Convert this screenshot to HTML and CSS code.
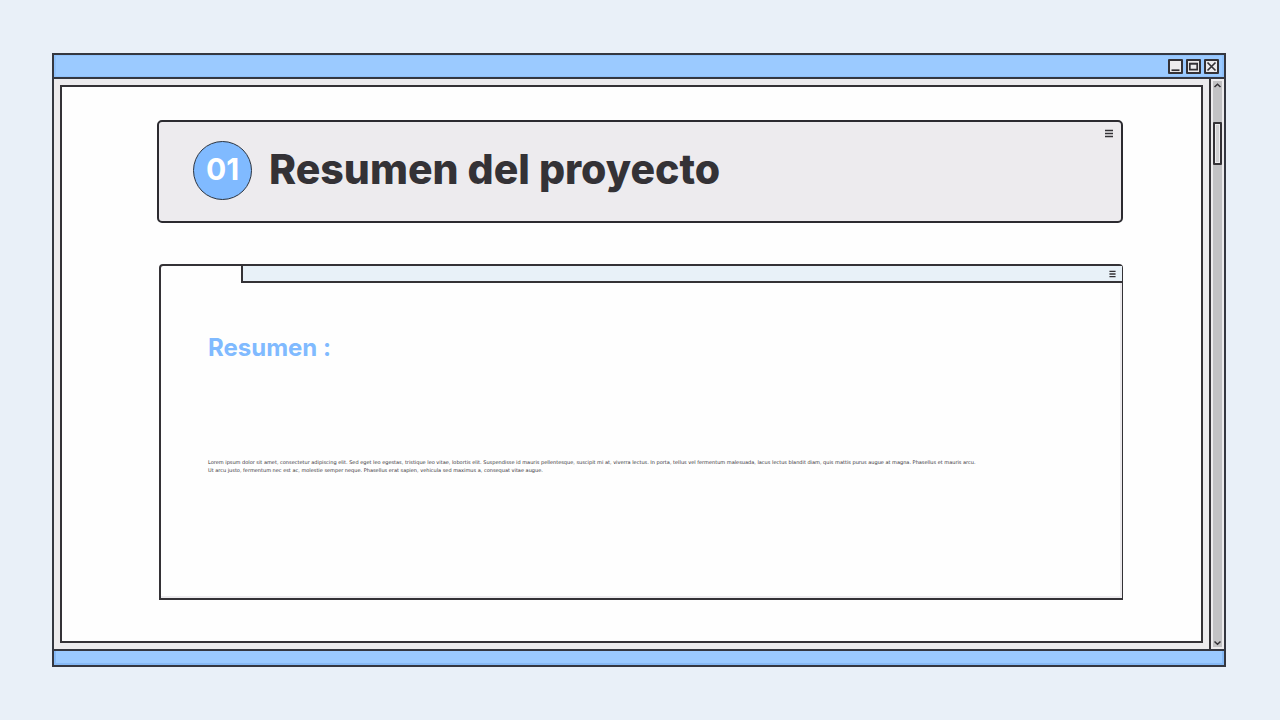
FILE: index.html
```html
<!DOCTYPE html>
<html lang="es">
  <head>
    <meta charset="UTF-8" />
    <meta name="viewport" content="width=device-width, initial-scale=1" />
    <title>Resumen del proyecto</title>
    <link rel="stylesheet" href="styles.css">
  </head>
  <body>
    <div class="window">
      <!-- Title bar -->
      <div class="titlebar">
        <button class="win-btn" type="button" aria-label="Minimizar">
          <svg viewBox="0 0 15 15"><path d="M3.5 11.2h8" /></svg>
        </button>
        <button class="win-btn" type="button" aria-label="Maximizar">
          <svg viewBox="0 0 15 15"><path d="M3.8 4.5h7.4v6.2H3.8z" /><path d="M3.5 4.8h8" /></svg>
        </button>
        <button class="win-btn" type="button" aria-label="Cerrar">
          <svg viewBox="0 0 15 15"><path d="M3.5 3.5l8 8M11.5 3.5l-8 8" /></svg>
        </button>
      </div>

      <div class="window-body">
        <main class="page">
          <header class="banner">
            <div class="number">01</div>
            <h1>Resumen del proyecto</h1>
            <button class="menu-btn" type="button" aria-label="Menú">
              <svg viewBox="0 0 8 9"><path d="M0 1.5h8M0 4.5h8M0 7.5h8" /></svg>
            </button>
          </header>

          <section class="panel">
            <div class="panel-top">
              <div class="tab"></div>
              <div class="panel-bar">
                <button class="menu-btn small" type="button" aria-label="Opciones">
                  <svg viewBox="0 0 8 9"><path d="M0.5 1.5h7M0.5 4.5h7M0.5 7.5h7" /></svg>
                </button>
              </div>
            </div>
            <div class="panel-content">
              <h2>Resumen :</h2>
              <p>
                Lorem ipsum dolor sit amet, consectetur adipiscing elit. Sed eget leo egestas, tristique leo vitae, lobortis elit. Suspendisse id mauris pellentesque, suscipit mi at, viverra lectus. In porta, tellus vel fermentum malesuada, lacus lectus blandit diam, quis mattis purus augue at magna. Phasellus et mauris arcu.<br />
                Ut arcu justo, fermentum nec est ac, molestie semper neque. Phasellus erat sapien, vehicula sed maximus a, consequat vitae augue.
              </p>
            </div>
          </section>
        </main>

        <!-- Scrollbar -->
        <div class="scrollbar">
          <button class="scroll-btn" type="button" aria-label="Subir">
            <svg viewBox="0 0 9 8"><path d="M1.5 6l3-2.8 3 2.8" /></svg>
          </button>
          <div class="track"><div class="thumb"></div></div>
          <button class="scroll-btn" type="button" aria-label="Bajar">
            <svg viewBox="0 0 9 8"><path d="M1.5 2.5l3 2.8 3-2.8" /></svg>
          </button>
        </div>
      </div>

      <div class="bottombar"></div>
    </div>
  </body>
</html>
```

FILE: styles.css
```css
* {
  box-sizing: border-box;
}
body {
  margin: 0;
  min-height: 100vh;
  padding: 53px 54px 53px 52px;
  display: flex;
  background: #e9f0f8;
  color: #343236;
  font-family: Inter, "Liberation Sans", sans-serif;
}
h1,
h2,
p {
  margin: 0;
}
button {
  padding: 0;
  border: 0;
  background: none;
  color: inherit;
}
svg {
  display: block;
  width: 100%;
  height: 100%;
  fill: none;
  stroke: #343236;
  stroke-width: 2;
}

/* Window frame */
.window {
  flex: 1;
  min-width: 0;
  display: flex;
  flex-direction: column;
  border: 2px solid #343740;
  background: #ecebed;
}
.titlebar {
  display: flex;
  justify-content: flex-end;
  gap: 3px;
  height: 24px;
  padding: 4px 5px 0;
  background: #9bcaff;
  border-bottom: 2px solid #343740;
  box-shadow: inset 2px 1px #8fc1fa, inset -2px -1px #8fc1fa;
}
.win-btn {
  width: 15px;
  height: 15px;
  border: 2px solid #343236;
  border-radius: 1px;
  background: #ecebed;
}
.win-btn svg {
  width: 15px;
  height: 15px;
  margin: -2px;
  stroke-width: 1.7;
}
.window-body {
  flex: 1;
  display: flex;
  min-width: 0;
}
.bottombar {
  height: 16px;
  background: #9bcaff;
  border-top: 2px solid #343740;
  box-shadow: inset 2px 0 #86b9f5, inset -2px -2px #86b9f5;
}

/* Scrollbar */
.scrollbar {
  display: flex;
  flex-direction: column;
  width: 15px;
  padding: 2px;
  border-left: 2px solid #343236;
}
.scroll-btn {
  height: 8px;
  background: #c2c2c4;
}
.scroll-btn svg {
  stroke-width: 1.5;
}
.track {
  flex: 1;
  padding-top: 33px;
  background: #c2c2c4;
}
.thumb {
  height: 43px;
  border: 2px solid #343236;
  border-radius: 1px;
  background: #ecebed;
  box-shadow: inset 0 0 0 1px #ecebed, inset 0 0 0 3px #d0d0d2;
}

/* Page */
.page {
  flex: 1;
  min-width: 0;
  display: flex;
  flex-direction: column;
  gap: 41px;
  margin: 6px;
  padding: 33px 78px 41px 95px;
  border: 2px solid #343236;
  background: #fefefe;
}
.banner {
  position: relative;
  display: flex;
  align-items: center;
  gap: 17px;
  height: 103px;
  padding: 0 34px 2px;
  border: 2px solid #2c2b30;
  border-radius: 5px;
  background: #edebee;
}
.number {
  width: 59px;
  height: 59px;
  padding-bottom: 4px;
  display: flex;
  align-items: center;
  justify-content: center;
  border: 1px solid #2b3440;
  border-radius: 50%;
  background: #80baff;
  color: #fff;
  font-size: 30px;
  font-weight: 700;
}
h1 {
  padding-bottom: 4px;
  font-size: 41px;
  line-height: 52px;
  font-weight: 800;
}
.menu-btn {
  position: absolute;
  top: 7px;
  right: 8px;
  width: 8px;
  height: 9px;
}
.menu-btn svg {
  stroke-width: 1.7;
}
.menu-btn.small {
  position: static;
  width: 7px;
  height: 8px;
}

/* Panel */
.panel {
  flex: 1;
  display: flex;
  flex-direction: column;
  margin-left: 2px;
  border: 2px solid #343236;
  border-right-width: 1px;
  border-radius: 4px 4px 0 0;
  box-shadow: inset -2px -2px #edebee;
}
.panel-top {
  display: flex;
  height: 17px;
}
.tab {
  width: 80px;
}
.panel-bar {
  flex: 1;
  display: flex;
  align-items: center;
  justify-content: flex-end;
  padding-right: 6px;
  border-left: 2px solid #343236;
  border-bottom: 2px solid #343236;
  background: #e8f1f8;
}
.panel-content {
  padding: 50px 47px;
}
h2 {
  color: #80baff;
  font-size: 24px;
  line-height: 30px;
  font-weight: 700;
}
.panel-content p {
  margin-top: 95px;
  font-family: "DejaVu Sans", Inter, sans-serif;
  font-size: 5px;
  line-height: 8px;
}
```
